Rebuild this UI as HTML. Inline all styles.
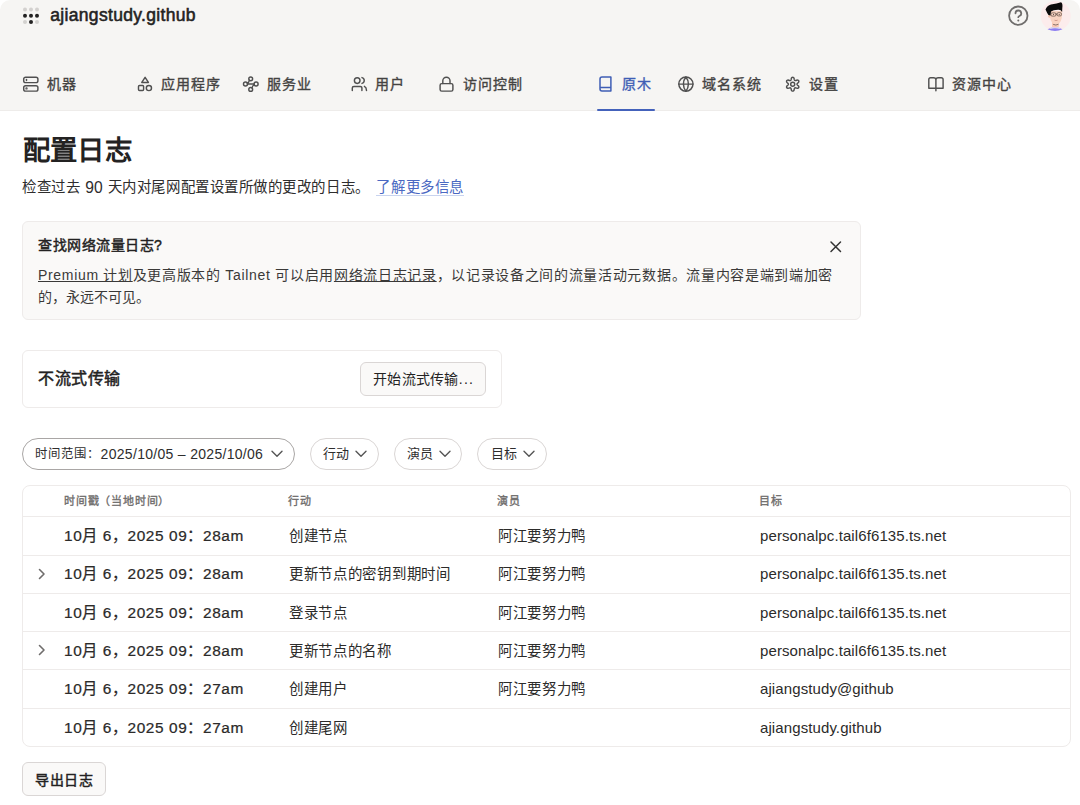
<!DOCTYPE html>
<html lang="zh-CN"><head><meta charset="utf-8">
<style>
*{box-sizing:border-box;margin:0;padding:0}
html,body{width:1080px;height:805px;overflow:hidden;background:#fff}
body{font-family:"Liberation Sans",sans-serif;color:#232222;position:relative}
.a{position:absolute;white-space:nowrap}
#hdr{position:absolute;left:0;top:0;width:1080px;height:111px;background:#f6f5f3;border-radius:10px 10px 0 0;border-bottom:1px solid #eeecea}
.nav{position:absolute;top:75px;height:18px;font-size:14px;letter-spacing:.86px;line-height:18px;color:#444342;font-weight:400;-webkit-text-stroke:0.35px #444342}
.nav svg{position:absolute;left:0;top:1px;overflow:visible}
.nav span{position:absolute;top:.1px;white-space:nowrap}
.nav.act{color:#3f5eb5;-webkit-text-stroke-color:#3f5eb5}
</style></head>
<body>
<div id="hdr">
  <!-- logo dots -->
  <svg class="a" style="left:20px;top:5px" width="22" height="22" viewBox="0 0 22 22">
    <g fill="#d3d1cf"><circle cx="5" cy="4.5" r="2"/><circle cx="11" cy="4.5" r="2"/><circle cx="17" cy="4.5" r="2"/><circle cx="5" cy="16.9" r="2"/><circle cx="17" cy="16.9" r="2"/></g>
    <g fill="#232222"><circle cx="5" cy="10.7" r="2"/><circle cx="11" cy="10.7" r="2"/><circle cx="17" cy="10.7" r="2"/><circle cx="11" cy="16.9" r="2"/></g>
  </svg>
  <div class="a" id="org" style="left:50.3px;top:4.1px;font-size:17.5px;letter-spacing:.32px;line-height:22px;font-weight:400;-webkit-text-stroke:.55px #232222;color:#232222">ajiangstudy.github</div>
  <!-- help -->
  <svg class="a" style="left:1006px;top:4px" width="24" height="24" viewBox="0 0 24 24" fill="none" stroke="#6f6d6c" stroke-width="1.8" stroke-linecap="round">
    <circle cx="12.3" cy="11.7" r="9.2"/>
    <path d="M9.5 9.3a2.85 2.85 0 1 1 3.9 2.7c-.6.3-1.1.7-1.1 1.2"/>
    <circle cx="12.3" cy="16.5" r="1" fill="#6f6d6c" stroke="none"/>
  </svg>
  <!-- avatar -->
  <svg class="a" style="left:1040px;top:1px" width="31" height="31" viewBox="0 0 31 31">
    <circle cx="15.7" cy="14.9" r="15" fill="#fcecec"/>
    <path d="M7.5 28.2 Q15 24.5 22.5 28.2 Q15 31.6 7.5 28.2Z" fill="#8c7ff2"/>
    <path d="M9.5 27 Q15 24.6 20.5 27 L19.5 28 Q15 26.6 10.5 28Z" fill="#d9d6f0"/>
    <path d="M12 20 V26 Q15.5 27 19 25.5 L18.6 20Z" fill="#f7c8b5"/>
    <path d="M13.2 23.4 Q16 24.8 18.6 23" stroke="#333" stroke-width=".6" fill="none"/>
    <circle cx="9.8" cy="15.2" r="1.6" fill="#f4c4b0"/>
    <path d="M9.8 10 Q9.5 19 12.5 22 Q15.5 24.5 19.5 22 Q22.6 18.5 22.1 10 Z" fill="#f9d3c1"/>
    <path d="M5.5 8.5 Q7 4.5 11 3.5 Q17 2.5 21 1.2 Q23 2.5 22.3 7 L22.1 11 Q21 8.5 18 8.8 Q13 9 11 10.5 L10.5 14.5 Q8 14.5 7.2 12 Z" fill="#0b0b0b"/>
    <g fill="none" stroke="#4a3a34" stroke-width=".65"><rect x="10.9" y="11.9" width="5" height="3.2" rx="1.1"/><rect x="17.1" y="11.7" width="4.3" height="3.2" rx="1.1"/><path d="M15.9 13.2h1.2"/></g><circle cx="13.5" cy="13.6" r=".5" fill="#3a2e2a"/><circle cx="19.2" cy="13.4" r=".5" fill="#3a2e2a"/>
    <path d="M14.5 19.2 Q16 20 17.6 19.2" stroke="#c98f82" stroke-width=".8" fill="none"/>
  </svg>

  <!-- nav -->
  <div class="nav" style="left:23px"><svg width="17" height="17" viewBox="0 0 17 17" fill="none" stroke="#505050" stroke-width="1.45" stroke-linecap="round" stroke-linejoin="round"><rect x=".7" y="1.2" width="14.2" height="5.4" rx="1.9"/><rect x=".7" y="9.7" width="14.2" height="5.4" rx="1.9"/><path d="M3.5 3.5v1" /><circle cx="3.5" cy="12.4" r=".45" fill="#505050"/></svg><span style="left:24px">机器</span></div>
  <div class="nav" style="left:137px"><svg width="17" height="17" viewBox="0 0 17 17" fill="none" stroke="#505050" stroke-width="1.45" stroke-linecap="round" stroke-linejoin="round"><path d="M8.1 1.3 L11.4 6.4 H4.8 Z"/><rect x="1.5" y="9.5" width="5.1" height="5" rx="1"/><circle cx="11.9" cy="12" r="2.6"/></svg><span style="left:24px">应用程序</span></div>
  <div class="nav" style="left:242px"><svg width="17" height="17" viewBox="0 0 17 17" fill="none" stroke="#505050" stroke-width="1.45" stroke-linecap="round" stroke-linejoin="round"><circle cx="8.7" cy="2.8" r="1.9"/><circle cx="3.5" cy="8" r="2"/><circle cx="14.1" cy="8" r="2"/><circle cx="8.7" cy="13.4" r="1.9"/><path d="M5.5 8H12.1M7.4 4.3Q6.9 6.6 5.2 7.1M10 11.9Q10.5 9.5 12.3 8.9"/></svg><span style="left:25px">服务业</span></div>
  <div class="nav" style="left:351px"><svg width="17" height="17" viewBox="0 0 17 17" fill="none" stroke="#505050" stroke-width="1.45" stroke-linecap="round" stroke-linejoin="round"><circle cx="6.2" cy="4.6" r="2.8"/><path d="M1.3 14.4V12a1.6 1.6 0 0 1 1.6-1.6h6.4A1.6 1.6 0 0 1 10.9 12v2.4M11 1.6a3 3 0 0 1 0 5.8M13.4 10.3q2.1 1 2.1 4.1"/></svg><span style="left:24px">用户</span></div>
  <div class="nav" style="left:439px"><svg width="17" height="17" viewBox="0 0 17 17" fill="none" stroke="#505050" stroke-width="1.45" stroke-linecap="round" stroke-linejoin="round"><rect x="1.1" y="7.6" width="12.8" height="7.5" rx="1.6"/><path d="M3.8 7.6V4.8a3.6 3.6 0 0 1 7.2 0v2.8"/></svg><span style="left:24px">访问控制</span></div>
  <div class="nav act" style="left:598px"><svg width="17" height="17" viewBox="0 0 17 17" fill="none" stroke="#3f5eb5" stroke-width="1.5" stroke-linejoin="round"><path d="M4 1H12.9V15.1H4A2 2 0 0 1 2 13.1V3A2 2 0 0 1 4 1ZM2 11.5H12.9"/></svg><span style="left:24px">原木</span></div>
  <div class="nav" style="left:678px"><svg width="17" height="17" viewBox="0 0 17 17" fill="none" stroke="#505050" stroke-width="1.45" stroke-linecap="round" stroke-linejoin="round"><circle cx="7.9" cy="8.1" r="7.1"/><path d="M.8 8.1H15M7.9 1Q5.4 4 5.4 8.1T7.9 15.2M7.9 1Q10.4 4 10.4 8.1T7.9 15.2"/></svg><span style="left:24px">域名系统</span></div>
  <div class="nav" style="left:785px"><svg width="17" height="17" viewBox="0 0 17 17" fill="none" stroke="#505050" stroke-width="1.45" stroke-linecap="round" stroke-linejoin="round"><path d="M7.70 1.30 L8.06 1.35 L8.40 1.52 L8.72 1.78 L8.98 2.16 L9.15 2.79 L9.25 3.42 L9.39 3.81 L9.52 4.11 L9.67 4.33 L9.85 4.48 L10.07 4.56 L10.33 4.58 L10.66 4.54 L11.06 4.46 L11.66 4.24 L12.29 4.07 L12.75 4.11 L13.14 4.25 L13.45 4.47 L13.68 4.75 L13.81 5.09 L13.84 5.47 L13.76 5.87 L13.57 6.29 L13.11 6.75 L12.62 7.15 L12.35 7.46 L12.15 7.73 L12.04 7.97 L12.00 8.20 L12.04 8.43 L12.15 8.67 L12.35 8.94 L12.62 9.25 L13.11 9.65 L13.57 10.11 L13.76 10.53 L13.84 10.93 L13.81 11.31 L13.68 11.65 L13.45 11.93 L13.14 12.15 L12.75 12.29 L12.29 12.33 L11.66 12.16 L11.06 11.94 L10.66 11.86 L10.33 11.82 L10.07 11.84 L9.85 11.92 L9.67 12.07 L9.52 12.29 L9.39 12.59 L9.25 12.98 L9.15 13.61 L8.98 14.24 L8.72 14.62 L8.40 14.88 L8.06 15.05 L7.70 15.10 L7.34 15.05 L7.00 14.88 L6.68 14.62 L6.42 14.24 L6.25 13.61 L6.15 12.98 L6.01 12.59 L5.88 12.29 L5.73 12.07 L5.55 11.92 L5.33 11.84 L5.07 11.82 L4.74 11.86 L4.34 11.94 L3.74 12.16 L3.11 12.33 L2.65 12.29 L2.26 12.15 L1.95 11.93 L1.72 11.65 L1.59 11.31 L1.56 10.93 L1.64 10.53 L1.83 10.11 L2.29 9.65 L2.78 9.25 L3.05 8.94 L3.25 8.67 L3.36 8.43 L3.40 8.20 L3.36 7.97 L3.25 7.73 L3.05 7.46 L2.78 7.15 L2.29 6.75 L1.83 6.29 L1.64 5.87 L1.56 5.47 L1.59 5.09 L1.72 4.75 L1.95 4.47 L2.26 4.25 L2.65 4.11 L3.11 4.07 L3.74 4.24 L4.34 4.46 L4.74 4.54 L5.07 4.58 L5.33 4.56 L5.55 4.48 L5.73 4.33 L5.88 4.11 L6.01 3.81 L6.15 3.42 L6.25 2.79 L6.42 2.16 L6.68 1.78 L7.00 1.52 L7.34 1.35Z"/><circle cx="7.7" cy="8.2" r="2"/></svg><span style="left:24px">设置</span></div>
  <div class="nav" style="left:928px"><svg width="17" height="17" viewBox="0 0 17 17" fill="none" stroke="#505050" stroke-width="1.45" stroke-linecap="round" stroke-linejoin="round"><path d="M7.9 14.8V3.8Q7.9 1.7 5.5 1.7H2.6Q.8 1.7 .8 3.5V12.3H15.1V3.5Q15.1 1.7 13.3 1.7H10.3Q7.9 1.7 7.9 3.8"/></svg><span style="left:24px">资源中心</span></div>
  <div class="a" style="left:597px;top:108.5px;width:58px;height:2.2px;background:#4462bb;border-radius:1px"></div>
</div>

<!-- title -->
<div class="a" style="left:22.6px;top:132.8px;font-size:27.4px;letter-spacing:.4px;line-height:36px;font-weight:700;color:#232222">配置日志</div>
<div class="a" id="sub" style="left:22px;top:177px;font-size:14.45px;letter-spacing:.55px;line-height:20px;color:#2e2d2d">检查过去<span style="letter-spacing:.9px"> </span><span style="font-size:15.6px;letter-spacing:.2px;position:relative;top:1px">90</span><span style="letter-spacing:.9px"> </span>天内对尾网配置设置所做的更改的日志。 <span style="margin-left:2.2px;color:#4a68c2;border-bottom:1px solid #c8d3ef">了解更多信息</span></div>

<!-- notice -->
<div class="a" style="left:22px;top:221px;width:839px;height:99px;background:#faf9f8;border:1px solid #eeebea;border-radius:6px"></div>
<div class="a" id="nh" style="left:38px;top:234.5px;font-size:14px;letter-spacing:.5px;line-height:20px;font-weight:400;-webkit-text-stroke:.45px #232222;color:#232222">查找网络流量日志?</div>
<svg class="a" style="left:829px;top:240px" width="13" height="13" viewBox="0 0 13 13" stroke="#333" stroke-width="1.5" stroke-linecap="round"><path d="M2 2L11.5 11.5M11.5 2L2 11.5"/></svg>
<div class="a" id="nb1" style="left:38px;top:265px;font-size:14px;letter-spacing:.68px;line-height:20px;color:#3a3938"><u>Premium 计划</u>及更高版本的 Tailnet 可以启用<u>网络流日志记录</u>，以记录设备之间的流量活动元数据。流量内容是端到端加密</div>
<div class="a" id="nb2" style="left:38px;top:287px;font-size:14px;line-height:20px;color:#3a3938">的，永远不可见。</div>

<!-- stream box -->
<div class="a" style="left:22px;top:350px;width:480px;height:58px;border:1px solid #eeebea;border-radius:6px"></div>
<div class="a" style="left:38px;top:367.8px;font-size:16px;letter-spacing:.5px;line-height:22px;font-weight:400;-webkit-text-stroke:.5px #232222;color:#232222">不流式传输</div>
<div class="a" style="left:360px;top:362px;width:126px;height:34px;background:#faf9f8;border:1px solid #dad6d5;border-radius:6px"></div>
<div class="a" style="left:373px;top:369px;font-size:14px;letter-spacing:.3px;line-height:20px;color:#232222">开始流式传输<span style="letter-spacing:1.2px">...</span></div>

<!-- filters -->
<div class="a" style="left:22px;top:438px;width:273px;height:32px;border:1px solid #a9a6a5;border-radius:16px"></div>
<div class="a" id="p1" style="left:34.6px;top:443.4px;font-size:12.4px;letter-spacing:1.2px;line-height:20px;color:#2e2d2d">时间范围：<span style="font-size:14px;letter-spacing:.3px;position:relative;top:.6px">2025/10/05 – 2025/10/06</span></div>
<div class="a" style="left:310px;top:438px;width:69px;height:32px;border:1px solid #dad6d5;border-radius:16px"></div>
<div class="a" style="left:322.7px;top:444px;font-size:13px;line-height:20px;color:#2e2d2d">行动</div>
<div class="a" style="left:394px;top:438px;width:68px;height:32px;border:1px solid #dad6d5;border-radius:16px"></div>
<div class="a" style="left:406.8px;top:444px;font-size:13px;line-height:20px;color:#2e2d2d">演员</div>
<div class="a" style="left:477px;top:438px;width:70px;height:32px;border:1px solid #dad6d5;border-radius:16px"></div>
<div class="a" style="left:491px;top:444px;font-size:13px;line-height:20px;color:#2e2d2d">目标</div>
<svg class="a" style="left:271px;top:450px" width="12" height="8" viewBox="0 0 12 8" fill="none" stroke="#555" stroke-width="1.4" stroke-linecap="round" stroke-linejoin="round"><path d="M1 1.2L6 6.2 11 1.2"/></svg>
<svg class="a" style="left:355px;top:450px" width="12" height="8" viewBox="0 0 12 8" fill="none" stroke="#555" stroke-width="1.4" stroke-linecap="round" stroke-linejoin="round"><path d="M1 1.2L6 6.2 11 1.2"/></svg>
<svg class="a" style="left:439px;top:450px" width="12" height="8" viewBox="0 0 12 8" fill="none" stroke="#555" stroke-width="1.4" stroke-linecap="round" stroke-linejoin="round"><path d="M1 1.2L6 6.2 11 1.2"/></svg>
<svg class="a" style="left:523px;top:450px" width="12" height="8" viewBox="0 0 12 8" fill="none" stroke="#555" stroke-width="1.4" stroke-linecap="round" stroke-linejoin="round"><path d="M1 1.2L6 6.2 11 1.2"/></svg>

<!-- table -->
<div id="tbl" class="a" style="left:22px;top:485px;width:1049px;height:262px;border:1px solid #eeebea;border-radius:8px"></div>
<style>.th{font-size:11px;letter-spacing:.8px;line-height:20px;font-weight:400;-webkit-text-stroke:.35px #6f6d6c;color:#6f6d6c}.td{font-size:14.45px;letter-spacing:.7px;line-height:20px;color:#2c2b2a}.lt{font-size:15px;letter-spacing:.1px}.td.b{font-size:15.4px;letter-spacing:.6px;-webkit-text-stroke:.22px #232222}</style>
<div class="a th" style="left:64px;top:491px">时间戳（当地时间）</div>
<div class="a th" style="left:288px;top:491px">行动</div>
<div class="a th" style="left:497px;top:491px">演员</div>
<div class="a th" style="left:759px;top:491px">目标</div>
<div class="a" style="left:23px;top:516.30px;width:1047px;height:1px;background:#eeebea"></div>
<div class="a td b" id="ts0" style="left:64px;top:526.10px">10月 6，2025 09：28am</div>
<div class="a td" id="at0" style="left:289px;top:526.10px">创建节点</div>
<div class="a td" id="ac0" style="left:498px;top:526.10px">阿江要努力鸭</div>
<div class="a td lt" id="tg0" style="left:760px;top:526.10px">personalpc.tail6f6135.ts.net</div>
<div class="a" style="left:23px;top:554.58px;width:1047px;height:1px;background:#eeebea"></div>
<svg class="a" style="left:37px;top:567.58px" width="10" height="12" viewBox="0 0 10 12" fill="none" stroke="#6f6d6c" stroke-width="1.6" stroke-linecap="round" stroke-linejoin="round"><path d="M2.5 1.5L7 6 2.5 10.5"/></svg>
<div class="a td b" id="ts1" style="left:64px;top:564.38px">10月 6，2025 09：28am</div>
<div class="a td" id="at1" style="left:289px;top:564.38px">更新节点的密钥到期时间</div>
<div class="a td" id="ac1" style="left:498px;top:564.38px">阿江要努力鸭</div>
<div class="a td lt" id="tg1" style="left:760px;top:564.38px">personalpc.tail6f6135.ts.net</div>
<div class="a" style="left:23px;top:592.86px;width:1047px;height:1px;background:#eeebea"></div>
<div class="a td b" id="ts2" style="left:64px;top:602.66px">10月 6，2025 09：28am</div>
<div class="a td" id="at2" style="left:289px;top:602.66px">登录节点</div>
<div class="a td" id="ac2" style="left:498px;top:602.66px">阿江要努力鸭</div>
<div class="a td lt" id="tg2" style="left:760px;top:602.66px">personalpc.tail6f6135.ts.net</div>
<div class="a" style="left:23px;top:631.14px;width:1047px;height:1px;background:#eeebea"></div>
<svg class="a" style="left:37px;top:644.14px" width="10" height="12" viewBox="0 0 10 12" fill="none" stroke="#6f6d6c" stroke-width="1.6" stroke-linecap="round" stroke-linejoin="round"><path d="M2.5 1.5L7 6 2.5 10.5"/></svg>
<div class="a td b" id="ts3" style="left:64px;top:640.94px">10月 6，2025 09：28am</div>
<div class="a td" id="at3" style="left:289px;top:640.94px">更新节点的名称</div>
<div class="a td" id="ac3" style="left:498px;top:640.94px">阿江要努力鸭</div>
<div class="a td lt" id="tg3" style="left:760px;top:640.94px">personalpc.tail6f6135.ts.net</div>
<div class="a" style="left:23px;top:669.42px;width:1047px;height:1px;background:#eeebea"></div>
<div class="a td b" id="ts4" style="left:64px;top:679.22px">10月 6，2025 09：27am</div>
<div class="a td" id="at4" style="left:289px;top:679.22px">创建用户</div>
<div class="a td" id="ac4" style="left:498px;top:679.22px">阿江要努力鸭</div>
<div class="a td lt" id="tg4" style="left:760px;top:679.22px">ajiangstudy@github</div>
<div class="a" style="left:23px;top:707.70px;width:1047px;height:1px;background:#eeebea"></div>
<div class="a td b" id="ts5" style="left:64px;top:717.50px">10月 6，2025 09：27am</div>
<div class="a td" id="at5" style="left:289px;top:717.50px">创建尾网</div>
<div class="a td lt" id="tg5" style="left:760px;top:717.50px">ajiangstudy.github</div>

<!-- export -->
<div class="a" style="left:22px;top:762px;width:84px;height:34px;background:#faf9f8;border:1px solid #dad6d5;border-radius:6px"></div>
<div class="a" style="left:35px;top:769.5px;font-size:14px;letter-spacing:.6px;line-height:20px;font-weight:400;-webkit-text-stroke:.45px #232222;color:#232222">导出日志</div>
</body></html>
